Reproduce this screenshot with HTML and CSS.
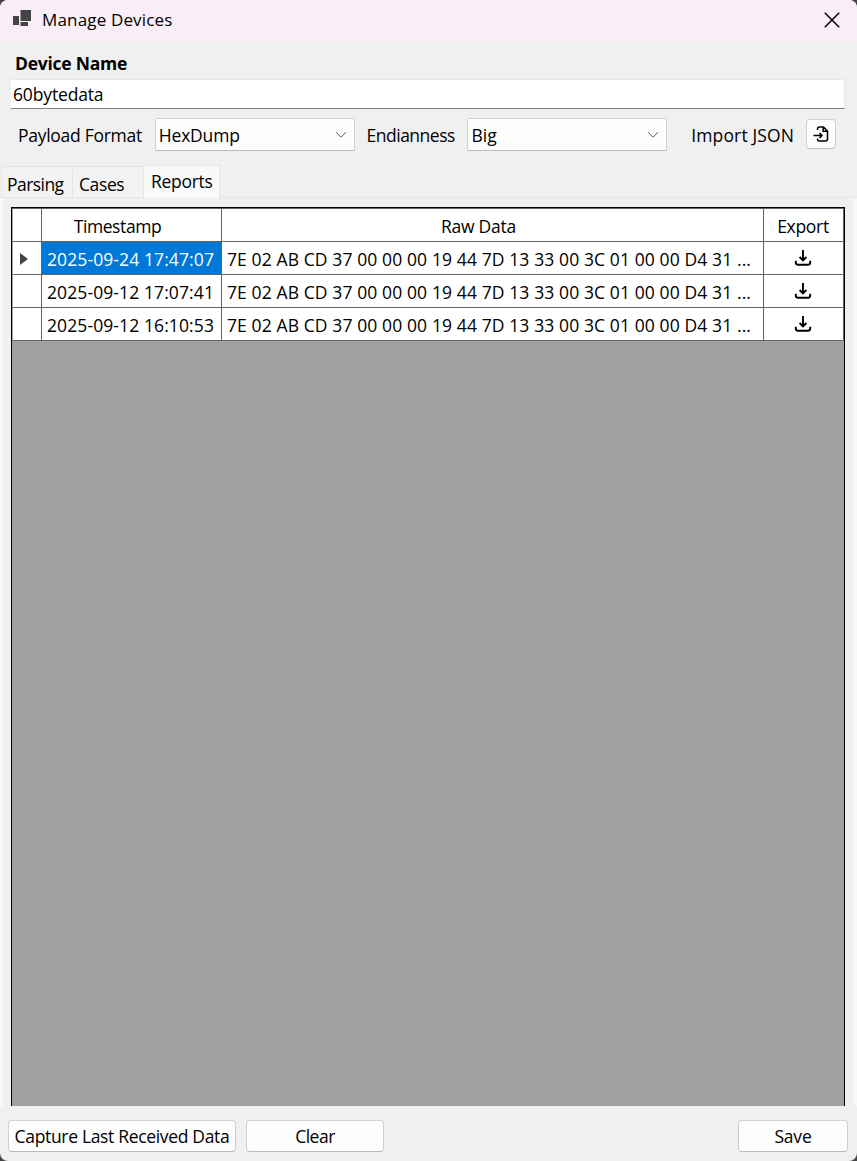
FILE: index.html
```html
<!DOCTYPE html>
<html lang="en">
<head>
<meta charset="utf-8">
<title>Manage Devices</title>
<link rel="stylesheet" href="styles.css">
</head>
<body>
<svg class="defs" aria-hidden="true">
  <symbol id="download" viewBox="0 0 18 18"><path d="M9 1v10.500M5.600 8L9 11.400 12.400 8M1.800 11.800v1.700q0 2.200 2.200 2.200h10q2.200 0 2.200-2.200v-1.700"/></symbol>
  <symbol id="chevron" viewBox="0 0 12 8"><path d="M1 1.200l5 5 5-5"/></symbol>
</svg>
<div class="window">
  <header class="titlebar">
    <svg class="app-icon" viewBox="0 0 20 18"><path d="M8.500 0h10.500v11h-10.500zM1 6h6v9h-6zM8.500 12h7.500v4h-7.500z"/></svg>
    <h1 class="title"><span class="t-title">Manage Devices</span></h1>
    <svg class="close" viewBox="0 0 16 16"><path d="M.8.8l14.400 14.400M15.200.8L.8 15.200"/></svg>
  </header>
  <div class="name-label"><span class="t-name">Device Name</span></div>
  <div class="name-input"><span class="t-input">60bytedata</span></div>
  <div class="options">
    <span class="payload-label t-payload">Payload Format</span>
    <div class="select"><span class="t-hex">HexDump</span><svg class="chevron"><use href="#chevron"/></svg></div>
    <span class="endian-label t-endian">Endianness</span>
    <div class="select"><span class="t-big">Big</span><svg class="chevron"><use href="#chevron"/></svg></div>
    <span class="import-label t-import">Import JSON</span>
    <button class="import-button"><svg class="import-icon" viewBox="0 0 16 16"><path d="M4.500 4V3q0-2 2-2h4L14.500 5v8q0 2-2 2h-6q-2 0-2-2v-.5M10.200 1v4.300h4.300M.5 9.500h8.500M6.500 7L9 9.500l-2.500 2.500"/></svg></button>
  </div>
  <nav class="tabs">
    <div class="tab parsing"><span class="t-parsing">Parsing</span></div>
    <div class="tab cases"><span class="t-cases">Cases</span></div>
    <div class="tab active"><span class="t-reports">Reports</span></div>
  </nav>
  <main class="panel">
    <div class="grid">
      <div class="row head"><div class="cell"></div><div class="cell center sortable"><span class="t-timestamp">Timestamp</span></div><div class="cell center sortable"><span class="t-raw">Raw Data</span></div><div class="cell center"><span class="t-export">Export</span></div></div>
      <div class="row"><div class="cell marker"><svg class="arrow" viewBox="0 0 8 12"><path d="M0 0l8 6-8 6z"/></svg></div><div class="cell selected"><span class="t-date">2025-09-24 17:47:07</span></div><div class="cell"><span class="t-data">7E 02 AB CD 37 00 00 00 19 44 7D 13 33 00 3C 01 00 00 D4 31 ...</span></div><div class="cell center"><svg class="download"><use href="#download"/></svg></div></div>
      <div class="row"><div class="cell"></div><div class="cell"><span class="t-date">2025-09-12 17:07:41</span></div><div class="cell"><span class="t-data">7E 02 AB CD 37 00 00 00 19 44 7D 13 33 00 3C 01 00 00 D4 31 ...</span></div><div class="cell center"><svg class="download"><use href="#download"/></svg></div></div>
      <div class="row"><div class="cell"></div><div class="cell"><span class="t-date">2025-09-12 16:10:53</span></div><div class="cell"><span class="t-data">7E 02 AB CD 37 00 00 00 19 44 7D 13 33 00 3C 01 00 00 D4 31 ...</span></div><div class="cell center"><svg class="download"><use href="#download"/></svg></div></div>
    </div>
  </main>
  <footer class="footer">
    <button class="button capture"><span class="t-capture">Capture Last Received Data</span></button>
    <button class="button clear"><span class="t-clear">Clear</span></button>
    <button class="button save"><span class="t-save">Save</span></button>
  </footer>
</div>
</body>
</html>
```
FILE: styles.css
```css
* { box-sizing: border-box; }
body { margin: 0; background: #444; font: 17.5px/24px "Open Sans", "Noto Sans", sans-serif; color: #000; }
svg { display: block; flex: none; fill: none; stroke: #000; }
span { white-space: nowrap; }
button { font: inherit; color: inherit; margin: 0; padding: 0; display: flex; align-items: center; justify-content: center; background: #fdfdfd; border: 1px solid #d0d0d0; border-bottom-color: #bcbcbc; border-radius: 4px; }
.defs { display: none; }
.window { width: 857px; height: 1161px; display: flex; flex-direction: column; background: #f0f0f0; border-radius: 8px; overflow: hidden; }
.titlebar { height: 42px; display: flex; align-items: center; padding: 0 17px 3px 12px; background: #f9eef8; }
.app-icon { width: 20px; height: 18px; margin-bottom: 1px; fill: #444; stroke: none; }
.title { margin: 0 auto 0 10px; font-size: 17px; font-weight: 400; }
.close { width: 16px; height: 16px; stroke-width: 1.5; }
.name-label { height: 37px; padding: 9px 15px 0; font-weight: 700; }
.name-input { height: 30px; margin: 0 12px 0 11px; padding: 2px 2px; background: #fff; border: solid #e6e6e6; border-width: 1px 1px 1px 0; border-bottom-color: #838383; }
.options { height: 56px; padding: 9px 21px 0 18px; display: flex; align-items: flex-start; }
.options > span { margin-top: 5px; }
.payload-label { width: 137px; }
.select { width: 200px; height: 33px; display: flex; align-items: center; justify-content: space-between; padding: 1px 7px 0 3px; background: #fdfdfd; border: 1px solid #d0d0d0; border-bottom-color: #bbb; border-radius: 2px; }
.chevron { width: 12px; height: 8px; stroke: #555; }
.endian-label { width: 101px; margin-left: 12px; }
.import-label { width: 115px; margin-left: 24px; }
.import-button { width: 30px; height: 30px; margin-top: 1px; }
.import-icon { width: 16px; height: 16px; stroke-width: 1.5; }
.tabs { height: 33px; padding-left: 1px; display: flex; align-items: flex-end; border-bottom: 1px solid #e5e5e5; }
.tab { height: 31px; padding: 5px 0 0 6px; background: #f3f3f3; border: 1px solid #e5e5e5; border-width: 1px 0 0 1px; }
.parsing { width: 71px; padding-left: 5px; }
.cases { width: 71px; }
.active { width: 77px; height: 33px; margin-bottom: -1px; padding: 3px 0 0 7px; background: #f9f9f9; border-right-width: 1px; }
.panel { height: 908px; padding: 9px 9px 0 8px; border-left: 3px solid #f9f9f9; border-right: 3px solid #f9f9f9; }
.grid { width: 834px; height: 899px; background: #a0a0a0; border: 1px solid #000; border-bottom: 0; }
.row { height: 33px; display: grid; grid-template-columns: 30px 180px 542px 80px; }
.head { height: 34px; border-top: 1px solid #646464; }
.cell { display: flex; align-items: center; padding: 2px 0 0 5px; background: #fff; border: solid #646464; border-width: 0 1px 1px 0; min-width: 0; }
.row > :first-child { border-left: 1px solid #a0a0a0; }
.center { justify-content: center; padding: 0 1px 0 0; }
.sortable { padding-right: 28px; }
.head .center { padding-top: 2px; }
.selected { background: #0078d7; color: #fff; }
.marker { padding-left: 7px; }
.arrow { width: 8px; height: 12px; fill: #444; stroke: none; }
.download { width: 18px; height: 18px; stroke-width: 1.9; }
.footer { height: 55px; padding: 14px 9px 0 8px; display: flex; align-items: flex-start; gap: 10px; }
.button { height: 32px; }
.capture { width: 228px; }
.clear { width: 138px; }
.save { width: 110px; margin-left: auto; }

/* Tracking per label */
.t-title { letter-spacing: .16px; }
.t-name { letter-spacing: -.25px; }
.t-input { letter-spacing: -.15px; }
.t-payload { letter-spacing: -.28px; }
.t-hex { letter-spacing: -.2px; }
.t-endian { letter-spacing: -.5px; }
.t-import { letter-spacing: .15px; }
.t-parsing { letter-spacing: -.55px; }
.t-cases { letter-spacing: -.4px; }
.t-reports { letter-spacing: -.3px; }
.t-timestamp { letter-spacing: -.4px; }
.t-raw { letter-spacing: -.25px; }
.t-export { letter-spacing: -.3px; }
.t-date { letter-spacing: .1px; }
.t-data { letter-spacing: .11px; }
.t-capture { letter-spacing: -.33px; }
.t-clear { letter-spacing: -.5px; }
.t-save { letter-spacing: -.2px; }
```
